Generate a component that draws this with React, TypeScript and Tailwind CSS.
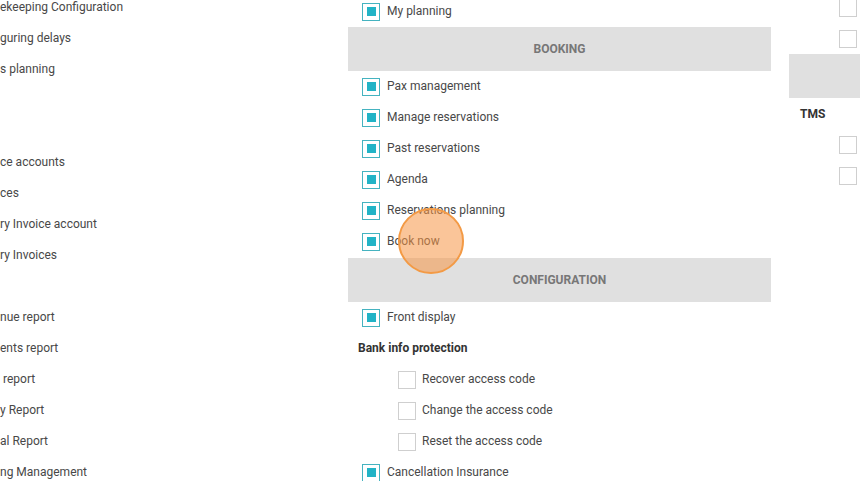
import React from "react";

const leftRows: (string | null)[] = [
  "ekeeping Configuration",
  "guring delays",
  "s planning",
  null,
  null,
  "ce accounts",
  "ces",
  "ry Invoice account",
  "ry Invoices",
  null,
  "nue report",
  "ents report",
  " report",
  "y Report",
  "al Report",
  "ng Management",
];

function Checked() {
  return (
    <span className="flex h-[18px] w-[18px] shrink-0 items-center justify-center border-[1.5px] border-[#45b3c0] bg-white">
      <span className="block h-[9px] w-[9px] bg-[#22b3c6]" />
    </span>
  );
}

function Empty() {
  return <span className="block h-[18px] w-[18px] shrink-0 border border-[#cfcfcf] bg-white" />;
}

function CheckRow({ label }: { label: string }) {
  return (
    <div className="flex h-[31px] items-center pl-[14px]">
      <Checked />
      <span className="ml-[7px] pb-[2px]">{label}</span>
    </div>
  );
}

function SubRow({ label }: { label: string }) {
  return (
    <div className="flex h-[31px] items-center pl-[50px]">
      <Empty />
      <span className="ml-[6px] pb-[2px]">{label}</span>
    </div>
  );
}

function Bar({ title }: { title: string }) {
  return (
    <div className="flex h-[44px] items-center justify-center bg-[#e0e0e0] text-[12px] font-bold text-[#777777]">
      {title}
    </div>
  );
}

export default function App() {
  return (
    <div
      className="relative h-[481px] w-[860px] overflow-hidden bg-white text-[12px] text-[#484848]"
      style={{ fontFamily: "Roboto, 'Liberation Sans', sans-serif" }}
    >
      <div className="flex">
        {/* left column */}
        <div className="-mt-[9px] w-[348px] shrink-0 overflow-hidden">
          {leftRows.map((t, i) => (
            <div key={i} className="flex h-[31px] items-center whitespace-pre">
              {t}
            </div>
          ))}
        </div>

        {/* middle column */}
        <div className="-mt-[4px] w-[423px] shrink-0">
          <CheckRow label="My planning" />
          <Bar title="BOOKING" />
          <CheckRow label="Pax management" />
          <CheckRow label="Manage reservations" />
          <CheckRow label="Past reservations" />
          <CheckRow label="Agenda" />
          <CheckRow label="Reservations planning" />
          <CheckRow label="Book now" />
          <div className="h-px" />
          <Bar title="CONFIGURATION" />
          <CheckRow label="Front display" />
          <div className="flex h-[31px] items-center pb-[2px] pl-[10px] font-bold text-[#333333]">
            Bank info protection
          </div>
          <SubRow label="Recover access code" />
          <SubRow label="Change the access code" />
          <SubRow label="Reset the access code" />
          <CheckRow label="Cancellation Insurance" />
        </div>

        {/* right column */}
        <div className="-mt-[8px] ml-[18px] w-[90px] shrink-0">
          <div className="flex h-[31px] items-center pl-[50px]">
            <Empty />
          </div>
          <div className="flex h-[31px] items-center pl-[50px]">
            <Empty />
          </div>
          <div className="h-[44px] bg-[#e0e0e0]" />
          <div className="flex h-[31px] items-center pl-[11px] font-bold text-[#333333]">TMS</div>
          <div className="flex h-[31px] items-center pl-[50px]">
            <Empty />
          </div>
          <div className="flex h-[31px] items-center pl-[50px]">
            <Empty />
          </div>
        </div>
      </div>

      {/* click highlight */}
      <div className="pointer-events-none absolute left-[398px] top-[208px] h-[66px] w-[66px] rounded-full border-2 border-[#f39a45] bg-[rgba(245,150,70,0.55)]" />
    </div>
  );
}
